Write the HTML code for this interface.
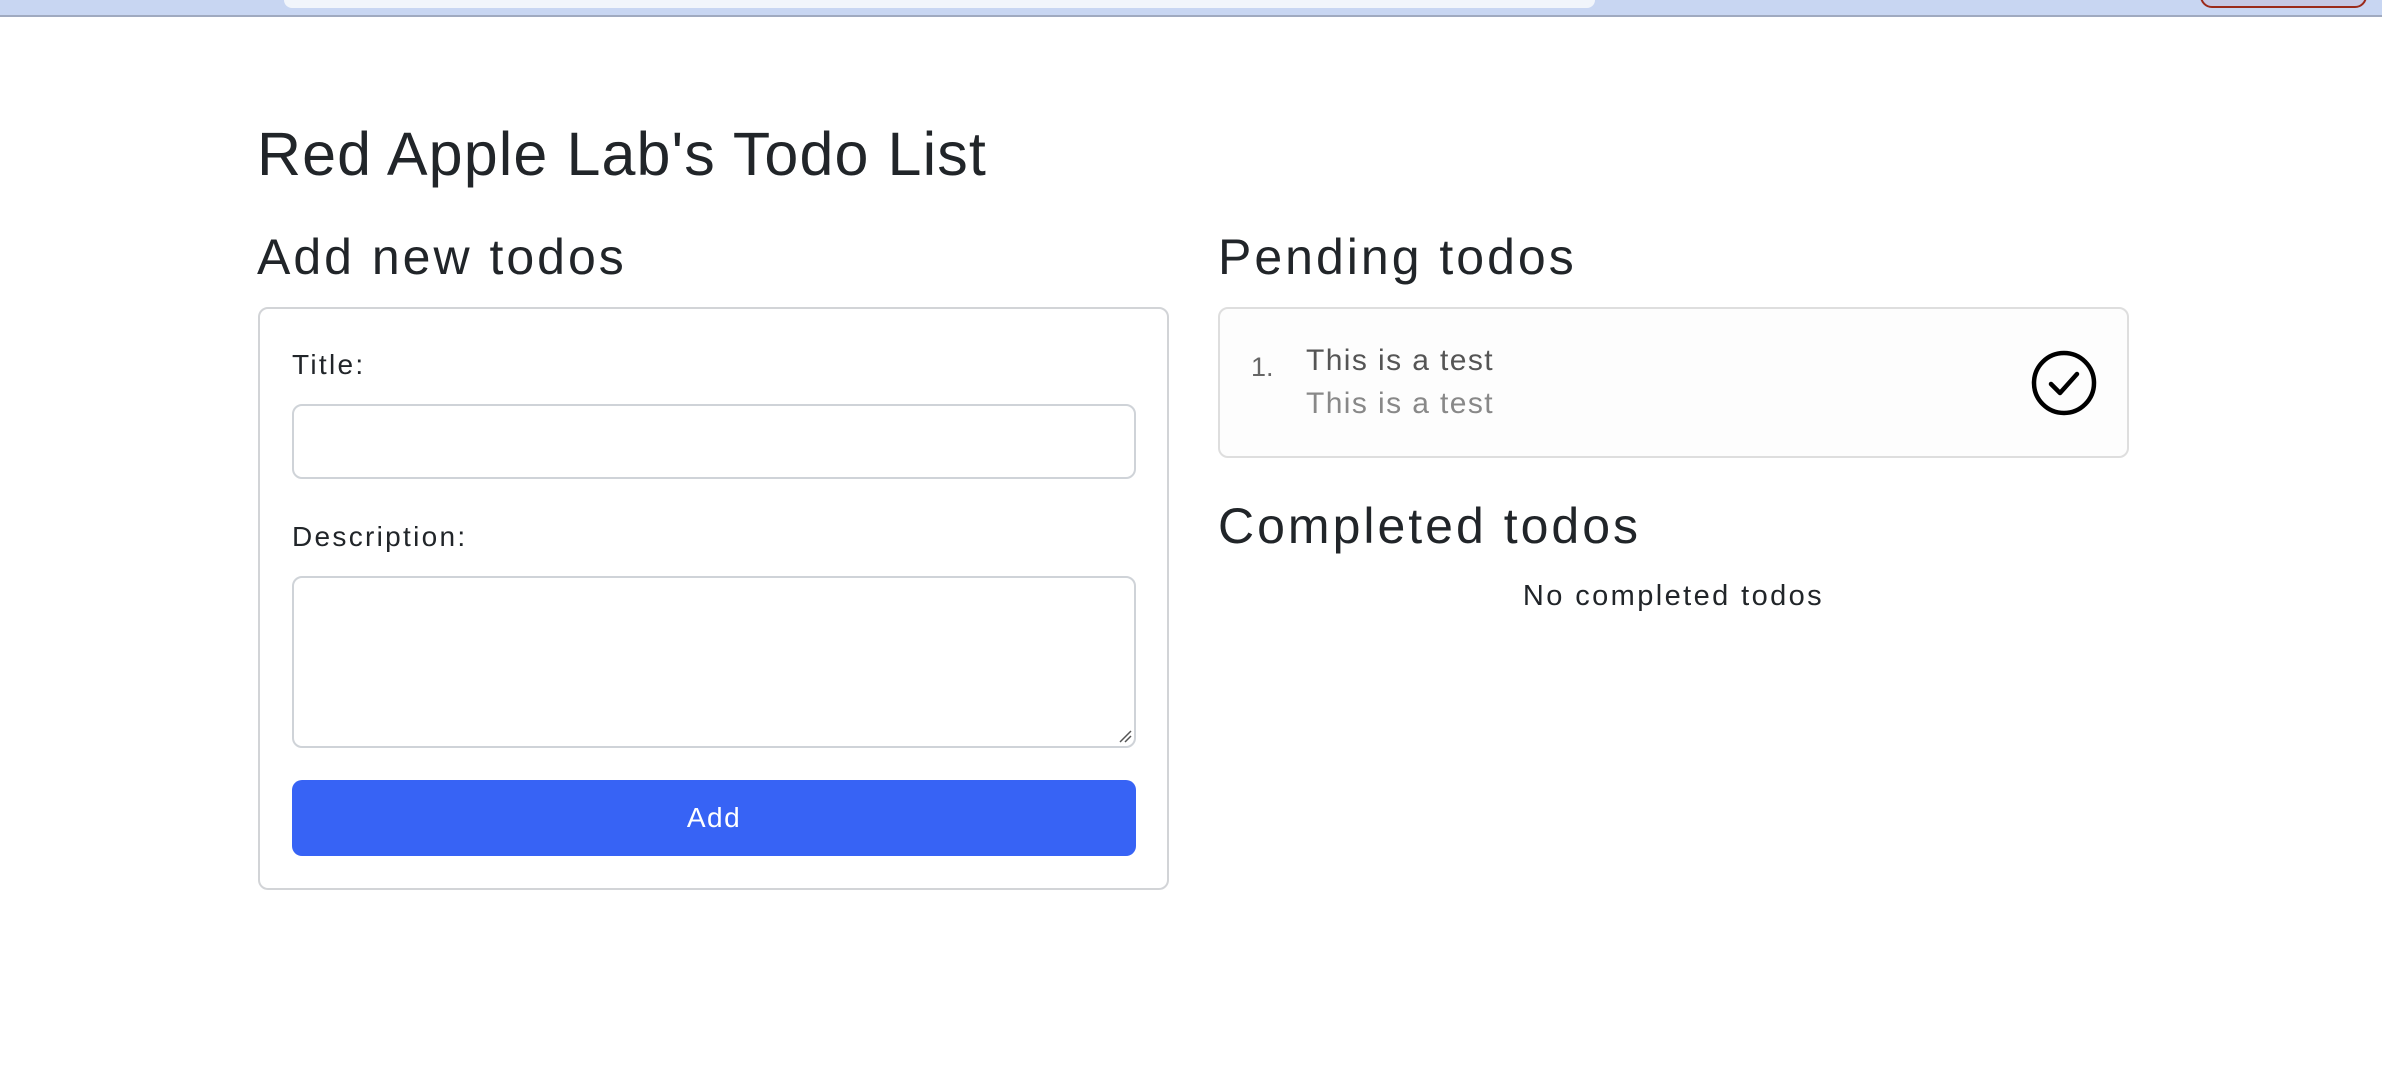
<!DOCTYPE html>
<html><head><meta charset="utf-8"><style>
*{box-sizing:border-box;margin:0;padding:0}
html,body{width:2382px;height:1086px;background:#fff;overflow:hidden;font-family:"Liberation Sans",sans-serif;color:#212529}
.a{position:absolute}
.h1{font-size:61px;line-height:1;letter-spacing:1.1px}
.h2{font-size:50px;line-height:1;letter-spacing:3px}
.lbl{font-size:28px;line-height:1;letter-spacing:2.3px}
.box{border:2px solid #cfd3d8;border-radius:10px;background:#fff}
</style></head><body>
<div class="a" style="left:0;top:0;width:2382px;height:15px;background:#c8d6f2"></div>
<div class="a" style="left:0;top:15px;width:2382px;height:2px;background:#a0aac0"></div>
<div class="a" style="left:284px;top:0;width:1311px;height:8px;background:#f1f5fb;border-radius:0 0 14px 14px"></div>
<div class="a" style="left:2200px;top:-10px;width:167px;height:18px;background:#c6c8e4;border:2px solid #9b2a1a;border-radius:0 0 12px 12px"></div>

<div class="a h1" style="left:257px;top:124px">Red Apple Lab's Todo List</div>
<div class="a h2" style="left:257px;top:232px">Add new todos</div>
<div class="a h2" style="left:1218px;top:232px">Pending todos</div>

<div class="a box" style="left:258px;top:307px;width:911px;height:583px;border-color:#d2d4d7"></div>
<div class="a lbl" style="left:292px;top:351px">Title:</div>
<div class="a box" style="left:292px;top:404px;width:844px;height:75px"></div>
<div class="a lbl" style="left:292px;top:523px">Description:</div>
<div class="a box" style="left:292px;top:576px;width:844px;height:172px"></div>
<svg class="a" style="left:1118px;top:729px" width="14" height="14"><path d="M2 13L13 2M7 13L13 7" stroke="#555" stroke-width="1.5"/></svg>
<div class="a" style="left:292px;top:780px;width:844px;height:76px;background:#3763f5;border-radius:10px;color:#fff;font-size:28px;letter-spacing:1.5px;line-height:76px;text-align:center">Add</div>

<div class="a" style="left:1218px;top:307px;width:911px;height:151px;background:#fdfdfd;border:2px solid #dedede;border-radius:10px"></div>
<div class="a" style="left:1251px;top:352px;font-size:27px;color:#666">1.</div>
<div class="a" style="left:1306px;top:344px;font-size:30px;letter-spacing:1.4px;color:#555">This is a test</div>
<div class="a" style="left:1306px;top:387px;font-size:30px;letter-spacing:1.4px;color:#888">This is a test</div>
<svg class="a" style="left:2028px;top:347px" width="72" height="72"><circle cx="36" cy="36" r="30" fill="none" stroke="#000" stroke-width="4.5"/><path d="M23 37L32 46L49 27" fill="none" stroke="#000" stroke-width="4.5" stroke-linecap="round" stroke-linejoin="round"/></svg>

<div class="a h2" style="left:1218px;top:501px">Completed todos</div>
<div class="a" style="left:1218px;top:580px;width:911px;text-align:center;font-size:29px;letter-spacing:2.4px;font-weight:500">No completed todos</div>
</body></html>
